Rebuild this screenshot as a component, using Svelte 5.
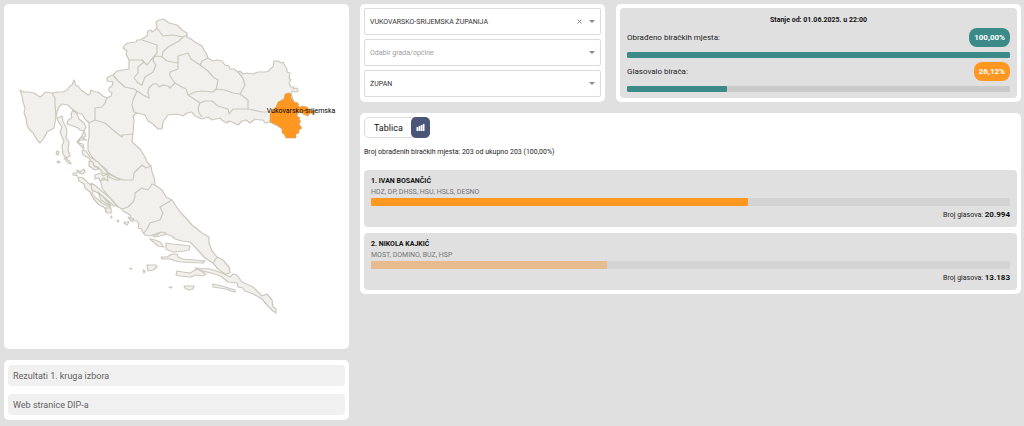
<script>
  let county = $state('VUKOVARSKO-SRIJEMSKA ŽUPANIJA');
  let town = $state('');
  let office = $state('ŽUPAN');
  let view = $state('chart');

  const status = [
    { label: 'Obrađeno biračkih mjesta:', value: '100,00%', percent: 100, accent: false },
    { label: 'Glasovalo birača:', value: '26,12%', percent: 26.12, accent: true },
  ];

  const candidates = [
    { name: '1. IVAN BOSANČIĆ', parties: 'HDZ, DP, DHSS, HSU, HSLS, DESNO', votes: '20.994', percent: 59 },
    { name: '2. NIKOLA KAJKIĆ', parties: 'MOST, DOMINO, BUZ, HSP', votes: '13.183', percent: 37 },
  ];

  const links = ['Rezultati 1. kruga izbora', 'Web stranice DIP-a'];

  const mainland =
    '20,90 24,92 29,92 34,93 40,97 43,95 45,92 52,93 58,92 63,92 67,90 70,86 72,85 74,80 76,86 78,86 81,90 84,92 88,95 90,94 91,90 95,92 98,92 103,96 107,98 111,96 112,93 109,91 109,88 112,86 113,82 107,81 107,78 110,76 113,75 117,71 129,69 129,60 126,54 127,51 123,48 125,45 128,43 136,42 137,40 140,40 147,36 148,31 151,30 152,32 155,30 157,28 156,22 159,20 163,19 165,20 169,23 177,25 182,30 187,33 187,37 191,39 195,42 202,46 204,50 206,53 208,58 213,61 217,60 222,61 225,65 229,66 230,69 234,69 238,72 240,71 243,74 247,73 253,74 258,72 265,72 269,71 270,69 273,67 274,61 278,61 281,63 283,62 285,66 287,69 287,72 290,73 289,78 291,80 289,83 291,87 294,87 293,89 297,88 298,91 295,92 292,91 291,94 296,108 285,130 270,122 265,123 263,120 260,120 255,119 250,123 246,120 242,121 238,125 232,122 229,121 227,123 223,121 220,118 212,120 208,117 202,119 195,116 192,112 187,113 183,116 177,114 168,115 163,122 162,129 158,129 153,124 148,121 145,115 137,113 133,116 134,120 133,133 132,142 140,149 145,157 147,162 151,166 152,172 154,177 155,185 162,190 166,197 172,200 176,206 180,212 185,217 192,225 202,233 209,237 209,243 212,251 217,257 223,260 229,267 230,273 225,274 218,269 213,263 205,258 195,247 190,242 182,241 175,239 172,236 165,234 158,233 150,236 145,235 142,231 142,229 138,228 139,224 137,221 132,221 130,215 123,211 122,209 118,207 110,198 102,188 101,183 100,180 104,180 108,175 107,170 98,163 92,157 88,150 88,143 89,137 89,123 85,119 82,114 78,113 72,109 68,105 62,104 59,107 57,112 56,117 54,128 47,132 44,138 40,143 37,140 33,133 29,129 27,125 26,118 24,113 25,108 23,102 22,96';

  const borders = [
    '52,93 55,98 55,104 56,117',
    '107,98 105,103 102,107 95,108 95,120 89,123',
    '95,120 105,123 113,130 122,137 122,135 133,134',
    '113,75 118,81 125,87 134,89 137,91 133,100 132,105 134,112 137,113',
    '137,91 143,95 149,98 148,92 149,88 153,84 157,84 159,87 163,85 168,86 170,88 175,83 182,87 186,89 188,95 200,103 198,108 199,113 202,117',
    '129,60 142,60 147,65 151,60 157,53 157,45 142,40',
    '142,60 144,62 138,67 138,73 134,78 138,83 142,85 145,77 153,72 156,65 153,61 154,57 157,56',
    '157,28 163,36 173,35 183,37 187,35',
    '183,37 179,41 168,47 163,52 162,57 157,56',
    '162,57 167,61 178,63 178,56 188,53 191,59 200,65 208,71 213,77 218,80 216,90',
    '178,63 178,69 170,72 170,76 175,83',
    '200,65 202,61 208,58',
    '188,95 195,92 202,91 213,92 216,89 225,90 233,93 240,94 245,85 243,78 238,72',
    '240,94 248,100 248,109 262,112 272,112',
    '200,103 205,101 212,101 218,106 228,109 229,114 233,109 248,109',
    '108,174 115,177 123,180 133,180 134,173 142,165 146,168 151,166',
    '122,209 128,207 133,202 135,197 135,193 142,188 148,190 152,184 155,185',
    '172,200 160,207 163,213 160,220 150,223 147,229 143,234',
    '217,257 213,263',
  ];

  const islands = [
    '73,110 77,114 79,119 84,123 86,127 84,131 80,130 78,128 73,126 67,124 68,120 72,118 71,114',
    '57,118 62,116 63,122 66,127 67,132 66,138 69,142 68,150 70,156 66,158 63,154 62,146 64,141 60,132 62,127 58,121',
    '66,158 70,162 71,164 68,163 64,158',
    '57,151 59,152 58,155 56,154',
    '58,161 60,162 59,163 57,162',
    '84,131 86,136 82,138 87,140 80,140 78,143 83,144 84,149 82,147 77,142 82,136',
    '82,150 86,151 90,157 98,162 107,172 108,175 103,173 98,167 94,166 89,158 83,155',
    '89,161 93,162 94,166 99,169 95,170 89,166',
    '95,175 101,173 103,176 107,174 108,181 104,178 100,181 99,178 95,179',
    '107,172 114,176 120,180 116,180 109,177',
    '78,177 83,178 87,182 92,186 94,190 92,193 95,197 102,203 110,207 111,212 106,212 105,208 98,204 93,198 90,192 85,188 84,184 79,181',
    '91,183 96,186 103,192 111,199 117,206 114,206 107,200 98,193 92,190',
    '98,192 105,199 111,206 107,204 101,200',
    '73,173 76,173 77,176 73,175',
    '77,170 80,172 84,169 85,172 82,174 77,172',
    '105,208 111,208 111,213 107,213',
    '111,216 112,217 111,218',
    '117,220 119,221 118,222',
    '124,222 129,222 127,225 124,223',
    '128,217 134,219 131,221',
    '166,243 172,244 182,245 190,246 189,250 184,251 173,252 166,249',
    '150,239 155,240 160,242 164,247 158,246',
    '153,235 157,235 161,232 166,233 164,235 160,236 154,237',
    '161,257 167,257 172,254 177,254 178,257 183,259 205,261 203,263 181,262 176,261 170,259 162,259',
    '147,265 156,265 157,267 153,270 148,271',
    '143,270 145,271 144,273',
    '130,268 132,269 130,269',
    '177,271 183,272 190,273 197,269 201,271 206,274 203,276 196,275 191,277 180,276 176,275',
    '195,268 210,269 222,273 230,277 233,274 237,275 242,282 253,287 262,296 267,294 272,300 273,307 276,309 276,313 273,311 268,306 262,299 257,296 253,294 248,292 245,291 243,288 238,287 237,283 228,282 222,277 218,275 203,271',
    '184,286 194,286 193,289 189,290 185,288',
    '169,287 172,287 171,288',
    '213,284 222,286 235,290 235,292 231,291 226,289 213,287',
  ];

  const selected =
    '285,94 289,93 291,94 291,98 294,102 298,103 299,107 303,106 307,107 310,110 315,111 314,114 310,113 308,116 303,114 302,112 298,113 297,116 300,118 299,120 301,121 299,124 302,128 299,130 299,133 296,134 296,138 286,138 284,134 282,133 282,129 277,125 270,122 270,114 272,110 276,107 278,102 284,99';
</script>

<main>
  <aside>
    <section class="card map">
      <svg viewBox="4 4 345 345" role="img" aria-label="Vukovarsko-srijemska">
        <g class="land">
          <polygon points={mainland} />
          {#each islands as points}
            <polygon {points} />
          {/each}
          {#each borders as points}
            <polyline {points} />
          {/each}
        </g>
        <polygon class="selected" points={selected} />
        <text x="301" y="113" text-anchor="middle">Vukovarsko-srijemska</text>
      </svg>
    </section>

    <nav class="card links">
      {#each links as link}
        <a href="#top">{link}</a>
      {/each}
    </nav>
  </aside>

  <div class="content">
    <form class="card filters">
      <div class="field">
        <select aria-label="Odabir županije" bind:value={county}>
          <option value=""></option>
          <option>VUKOVARSKO-SRIJEMSKA ŽUPANIJA</option>
        </select>
        <button class="clear" type="button" aria-label="Poništi odabir" onclick={() => (county = '')}>
          <svg viewBox="0 0 7 7"><path d="M1.500 1.500l4 4M5.500 1.500l-4 4" /></svg>
        </button>
      </div>
      <div class="field">
        <select class="empty" aria-label="Odabir grada/općine" bind:value={town}>
          <option value="">Odabir grada/općine</option>
        </select>
      </div>
      <div class="field">
        <select aria-label="Odabir funkcije" bind:value={office}>
          <option>ŽUPAN</option>
        </select>
      </div>
    </form>

    <section class="card">
      <div class="status">
        <h2>Stanje od: 01.06.2025. u 22:00</h2>
        {#each status as row}
          <div class="row">
            <span>{row.label}</span>
            <strong class:accent={row.accent}>{row.value}</strong>
          </div>
          <div class="bar"><div style="width: {row.percent}%"></div></div>
        {/each}
      </div>
    </section>

    <section class="card results">
      <div class="toggle">
        <button type="button" class:active={view === 'table'} onclick={() => (view = 'table')}>Tablica</button>
        <button type="button" class:active={view === 'chart'} aria-label="Grafikon" onclick={() => (view = 'chart')}>
          <svg viewBox="0 0 9 9">
            <path d="M0.500 4h1.700v4H0.500zM2.600 3h1.700v5H2.600zM4.700 2h1.700v6H4.700zM6.800 1h1.700v7H6.800z" />
          </svg>
        </button>
      </div>
      <p class="note">Broj obrađenih biračkih mjesta: 203 od ukupno 203 (100,00%)</p>

      {#each candidates as candidate, i}
        <article>
          <h3>{candidate.name}</h3>
          <p class="parties">{candidate.parties}</p>
          <div class="bar votes-bar" class:second={i > 0}>
            <div style="width: {candidate.percent}%"></div>
          </div>
          <p class="votes">Broj glasova: <b>{candidate.votes}</b></p>
        </article>
      {/each}
    </section>
  </div>
</main>

<style>
  :global(body) {
    background: #e0e0e0;
  }

  * {
    box-sizing: border-box;
    margin: 0;
  }

  main {
    display: grid;
    grid-template-columns: 345fr 661fr;
    align-items: start;
    gap: 11px;
    padding: 4px 3px 4px 4px;
    font-family: Roboto, 'Liberation Sans', sans-serif;
    font-size: 7px;
    color: #212121;
  }

  .card {
    background: #fff;
    border-radius: 5px;
    padding: 4px;
  }

  aside {
    display: grid;
    gap: 11px;
    min-width: 0;
  }

  .map {
    padding: 0;
  }

  .map svg {
    display: block;
    width: 100%;
  }

  .land {
    fill: #f1f0ed;
    stroke: #cac8bc;
    stroke-width: 1.2;
    stroke-linejoin: round;
  }

  .land polyline {
    fill: none;
  }

  .selected {
    fill: #ff9720;
    stroke: #cda66b;
    stroke-width: 0.6;
  }

  .map text {
    font-size: 7px;
    fill: #000;
  }

  .links {
    display: grid;
    gap: 8px;
    padding: 5px 4px;
  }

  .links a {
    padding: 1px 5px 0;
    border-radius: 4px;
    background: #f0f0f0;
    color: #616161;
    font-size: 9px;
    line-height: 20px;
    text-decoration: none;
  }

  .content {
    display: grid;
    grid-template-columns: 245fr 405fr;
    gap: 11px;
    min-width: 0;
  }

  .filters {
    display: grid;
    gap: 4px;
    padding-bottom: 5px;
  }

  .field {
    position: relative;
  }

  .field::after {
    content: '';
    position: absolute;
    right: 6px;
    top: 12px;
    border: 3px solid transparent;
    border-top-color: #8a8a8a;
    border-bottom: 0;
    pointer-events: none;
  }

  select {
    appearance: none;
    display: block;
    width: 100%;
    height: 27px;
    padding: 0 30px 0 5px;
    border: 1px solid #dcdcdc;
    border-radius: 2px;
    background: #fff;
    color: #333;
    font: inherit;
  }

  select.empty {
    color: #9e9e9e;
  }

  .clear {
    position: absolute;
    right: 18px;
    top: 10px;
    width: 7px;
    height: 7px;
    padding: 0;
    border: 0;
    background: none;
  }

  .clear svg {
    display: block;
    fill: none;
    stroke: #888;
  }

  .status {
    height: 100%;
    padding: 7px 7px 2px;
    border-radius: 4px;
    background: #e0e0e0;
  }

  h2 {
    font-size: 7px;
    line-height: 10px;
    text-align: center;
    color: #111;
  }

  .row {
    display: flex;
    justify-content: space-between;
    align-items: center;
    margin-top: 3px;
    font-size: 8px;
    line-height: 19px;
  }

  .row strong {
    padding: 0 5px;
    border-radius: 8px;
    background: #3b8a87;
    color: #fff;
  }

  .row .accent {
    background: #ff9720;
  }

  .bar {
    height: 6px;
    margin: 5px 0 4px;
    border-radius: 1px;
    background: #cacaca;
    overflow: hidden;
  }

  .bar div {
    height: 100%;
    border-radius: 1px;
    background: #3b8a87;
  }

  .results {
    grid-column: 1 / -1;
  }

  .toggle {
    display: inline-flex;
    height: 21px;
    border-radius: 5px;
    box-shadow: inset 0 0 0 1px #dcdcdc;
    vertical-align: top;
  }

  .toggle button {
    padding: 0 8px 0 10px;
    border: 0;
    border-radius: 5px;
    background: none;
    color: #111;
    font: inherit;
    font-size: 9px;
  }

  .toggle button + button {
    padding: 0 5px;
  }

  .toggle .active {
    background: #4a5578;
  }

  .toggle svg {
    display: block;
    width: 9px;
    height: 9px;
    fill: #fff;
  }

  .note {
    margin: 9px 0 12px;
    line-height: 11px;
  }

  article {
    padding: 6px 7px;
    border-radius: 4px;
    background: #e0e0e0;
  }

  article + article {
    margin-top: 6px;
  }

  h3 {
    font-size: 7px;
    line-height: 10px;
    color: #111;
  }

  .parties {
    line-height: 12px;
    color: #757575;
  }

  .votes-bar {
    height: 8px;
    margin: 0 0 3px;
    background: #d4d4d4;
  }

  .votes-bar div {
    background: #ff9720;
  }

  .second div {
    background: #e6bb8d;
  }

  .votes {
    line-height: 11px;
    text-align: right;
  }

  .votes b {
    font-size: 8px;
    color: #111;
  }
</style>
